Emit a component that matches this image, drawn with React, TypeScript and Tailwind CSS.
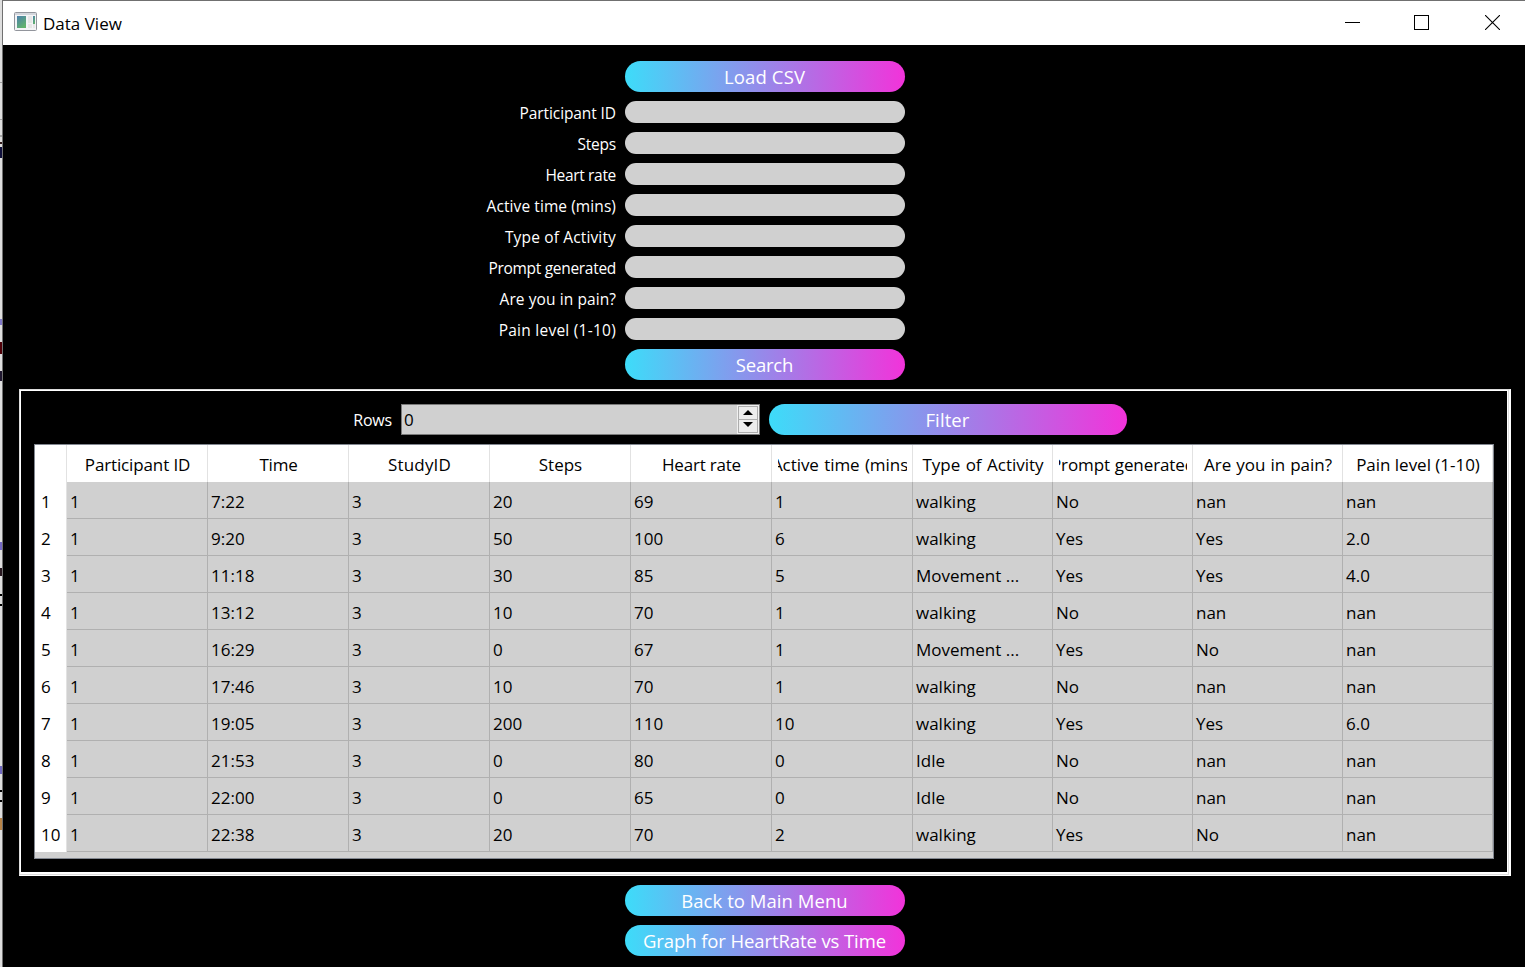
import React from "react";

const FONT = "font-['Open_Sans','Noto_Sans',sans-serif]";

const fields = [
  { label: "Participant ID", track: "tracking-[-0.1px]" },
  { label: "Steps", track: "tracking-[-0.2px]" },
  { label: "Heart rate", track: "tracking-[-0.32px]" },
  { label: "Active time (mins)", track: "tracking-[0.08px]" },
  { label: "Type of Activity", track: "tracking-[0.15px]" },
  { label: "Prompt generated", track: "tracking-[-0.3px]" },
  { label: "Are you in pain?", track: "tracking-[0.08px]" },
  { label: "Pain level (1-10)", track: "tracking-[0.25px]" },
];

const columns = [
  { name: "Participant ID", track: "tracking-[-0.13px]" },
  { name: "Time", track: "tracking-[-0.2px]" },
  { name: "StudyID", track: "tracking-[0.2px]" },
  { name: "Steps", track: "tracking-[0px]" },
  { name: "Heart rate", track: "tracking-[-0.2px]" },
  { name: "Active time (mins)", track: "tracking-[-0.06px] [word-spacing:1px]" },
  { name: "Type of Activity", track: "tracking-[0px] [word-spacing:1px]" },
  { name: "Prompt generated", track: "tracking-[-0.1px] [word-spacing:0.5px]" },
  { name: "Are you in pain?", track: "tracking-[0px] [word-spacing:0.6px]" },
  { name: "Pain level (1-10)", track: "tracking-[-0.02px]" },
];

const rows = [
  ["1", "7:22", "3", "20", "69", "1", "walking", "No", "nan", "nan"],
  ["1", "9:20", "3", "50", "100", "6", "walking", "Yes", "Yes", "2.0"],
  ["1", "11:18", "3", "30", "85", "5", "Movement ...", "Yes", "Yes", "4.0"],
  ["1", "13:12", "3", "10", "70", "1", "walking", "No", "nan", "nan"],
  ["1", "16:29", "3", "0", "67", "1", "Movement ...", "Yes", "No", "nan"],
  ["1", "17:46", "3", "10", "70", "1", "walking", "No", "nan", "nan"],
  ["1", "19:05", "3", "200", "110", "10", "walking", "Yes", "Yes", "6.0"],
  ["1", "21:53", "3", "0", "80", "0", "Idle", "No", "nan", "nan"],
  ["1", "22:00", "3", "0", "65", "0", "Idle", "No", "nan", "nan"],
  ["1", "22:38", "3", "20", "70", "2", "walking", "Yes", "No", "nan"],
];

const GRID = "grid grid-cols-[32px_repeat(6,141px)_140px_140px_150px_150px]";

function PillButton({
  children,
  width = "w-[280px]",
  track = "tracking-[-0.2px]",
}: {
  children: React.ReactNode;
  width?: string;
  track?: string;
}) {
  return (
    <button
      className={`${width} ${track} flex h-[31px] shrink-0 items-center justify-center rounded-full bg-linear-to-r/srgb from-[#3ddcf9] to-[#f233da] pt-px pr-px text-[18.5px] leading-none whitespace-nowrap text-white`}
    >
      {children}
    </button>
  );
}

function AppIcon() {
  return (
    <svg width="23" height="19" viewBox="0 0 23 19" className="shrink-0">
      <defs>
        <linearGradient id="pane" x1="0" y1="0" x2="0.6" y2="1">
          <stop offset="0" stopColor="#4b7fae" />
          <stop offset="1" stopColor="#62b36c" />
        </linearGradient>
      </defs>
      <rect x="0.5" y="0.5" width="22" height="18" rx="1" fill="#f4f4f6" stroke="#92959c" />
      <rect x="1" y="1" width="21" height="2" fill="#d3d6dc" />
      <rect x="3" y="4" width="9" height="12" fill="url(#pane)" />
      <rect x="14" y="4" width="4" height="7" fill="#e6e6e6" />
      <rect x="14" y="12" width="4" height="4" fill="#e6e6e6" />
      <rect x="19" y="4" width="2" height="8" fill="url(#pane)" />
      <rect x="19" y="12" width="2" height="4" fill="#e8e8e8" />
    </svg>
  );
}

function TitleBar() {
  return (
    <header className="flex h-[44px] shrink-0 items-start bg-white text-black">
      <div className="flex pt-[11px] pl-[11px]">
        <AppIcon />
        <span className="ml-[6px] text-[17px] leading-[24px]">Data View</span>
      </div>
      <div className="ml-auto flex pt-[14px] pr-[25px]">
        <svg width="15" height="15" shapeRendering="crispEdges">
          <rect y="7" width="15" height="1" />
        </svg>
        <svg width="15" height="15" className="ml-[54px]" shapeRendering="crispEdges">
          <rect x="0.5" y="0.5" width="14" height="14" fill="none" stroke="#000" />
        </svg>
        <svg width="15" height="15" className="ml-[56px]">
          <path d="M0 0L15 15M15 0L0 15" stroke="#000" strokeWidth="1.1" />
        </svg>
      </div>
    </header>
  );
}

function SpinBox() {
  return (
    <div className="ml-[9px] flex h-[31px] w-[359px] shrink-0 border border-[#7a7a7a] bg-[#d0d0d0] text-black">
      <span className="pl-[2px] text-[17px] leading-[30px]">0</span>
      <div className="ml-auto flex w-[22px] flex-col bg-[#f0f0f0] p-px">
        <div className="flex h-[14px] items-start justify-center border border-[#adadad] bg-[#ececec] pt-[3px]">
          <svg width="10" height="5"><path d="M0 5L5 0L10 5Z" /></svg>
        </div>
        <div className="-mt-px flex h-[14px] items-start justify-center border border-[#adadad] bg-[#ececec] pt-[2px]">
          <svg width="10" height="5"><path d="M0 0L5 5L10 0Z" /></svg>
        </div>
      </div>
    </div>
  );
}

function DataTable() {
  return (
    <div className="mt-[9px] ml-[13px] h-[415px] w-[1460px] border border-[#828790] bg-[#d0d0d0] text-[17px] text-black">
      <div className={`${GRID} h-[37px] bg-white`}>
        <div className="border-r border-[#e2e2e2]" />
        {columns.map((c) => (
          <div key={c.name} className="h-[37px] border-r border-[#e2e2e2] pr-[5px] pl-[6px]">
            <div className="flex h-full justify-center overflow-hidden leading-[39px] whitespace-nowrap">
              <span className={`${c.track} shrink-0`}>{c.name}</span>
            </div>
          </div>
        ))}
      </div>
      {rows.map((r, i) => (
        <div key={i} className={`${GRID} h-[37px] leading-[39px]`}>
          <div className="h-[37px] border-r border-[#e2e2e2] bg-white pl-[6px]">{i + 1}</div>
          {r.map((v, j) => (
            <div key={j} className="h-[37px] border-r border-b border-[#b0b0b0] pl-[3px] whitespace-nowrap">
              {v}
            </div>
          ))}
        </div>
      ))}
    </div>
  );
}

const slivers = [
  { top: 82, height: 1, color: "#a0a0a0" },
  { top: 119, height: 1, color: "#a0a0a0" },
  { top: 135, height: 2, color: "#a8a8a8" },
  { top: 142, height: 2, color: "#301818" },
  { top: 147, height: 11, color: "#10103c" },
  { top: 319, height: 6, color: "#8078c8" },
  { top: 342, height: 12, color: "#500008" },
  { top: 371, height: 10, color: "#201830" },
  { top: 542, height: 8, color: "#7468c4" },
  { top: 568, height: 8, color: "#281820" },
  { top: 594, height: 2, color: "#000000" },
  { top: 604, height: 2, color: "#000000" },
  { top: 766, height: 8, color: "#7068c0" },
  { top: 790, height: 2, color: "#000000" },
  { top: 800, height: 2, color: "#000000" },
  { top: 818, height: 12, color: "#b88448" },
];

export default function App() {
  return (
    <div className={`${FONT} flex h-[967px] w-[1525px] overflow-hidden bg-black`}>
      <div className="relative w-[2px] shrink-0 bg-[#dedede]">
        {slivers.map((s) => (
          <div
            key={s.top}
            className="absolute left-0 w-[2px]"
            style={{ top: s.top, height: s.height, background: s.color }}
          />
        ))}
      </div>
      <div className="flex min-w-0 flex-1 flex-col border-t border-l border-[#707070]">
        <TitleBar />
        <main className="flex flex-1 flex-col bg-black pt-[16px] text-white">
          <div className="ml-[622px]">
            <PillButton track="tracking-[0.15px]">Load CSV</PillButton>
          </div>
          <div className="mt-[9px] flex flex-col gap-[9px]">
            {fields.map((f) => (
              <div key={f.label} className="flex h-[22px]">
                <label className={`${f.track} w-[613px] text-right text-[15.5px] leading-[24px] whitespace-nowrap`}>
                  {f.label}
                </label>
                <div className="ml-[9px] w-[280px] rounded-full bg-[#d0d0d0]" />
              </div>
            ))}
          </div>
          <div className="mt-[9px] ml-[622px]">
            <PillButton>Search</PillButton>
          </div>
          <section className="mt-[9px] ml-[16px] h-[487px] w-[1492px] shrink-0 border-t border-r-2 border-b border-l border-t-[#dcdcdc] border-r-white border-b-white border-l-[#dcdcdc]">
            <div className="h-[485px] border-r border-b border-[#dcdcdc]">
              <div className="h-[484px] border-t border-r border-b-2 border-l border-white pt-[13px]">
                <div className="flex h-[31px]">
                  <span className="w-[371px] text-right text-[16px] leading-[32px] tracking-[-0.2px]">Rows</span>
                  <SpinBox />
                  <div className="ml-[9px]">
                    <PillButton width="w-[358px]" track="tracking-[0.1px]">Filter</PillButton>
                  </div>
                </div>
                <DataTable />
              </div>
            </div>
          </section>
          <div className="mt-[9px] ml-[622px] flex flex-col gap-[9px]">
            <PillButton track="tracking-[0.05px]">Back to Main Menu</PillButton>
            <PillButton track="tracking-[-0.1px]">Graph for HeartRate vs Time</PillButton>
          </div>
        </main>
      </div>
    </div>
  );
}
